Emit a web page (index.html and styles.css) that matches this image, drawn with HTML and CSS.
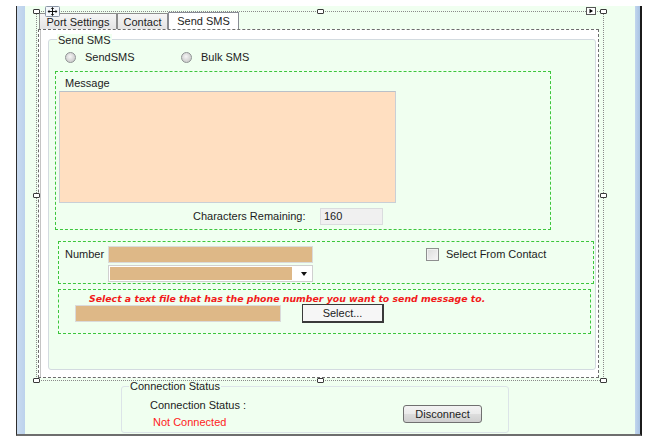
FILE: index.html
```html
<!DOCTYPE html>
<html lang="en">
<head>
<meta charset="utf-8">
<title>Send SMS - Designer</title>
<link rel="stylesheet" href="styles.css">
</head>
<body>
<div class="window">
  <div class="strip-left"></div>
  <div class="canvas">
    <div class="uc">
      <div class="tabs">
        <div class="tab tab-port">Port Settings</div>
        <div class="tab tab-contact">Contact</div>
        <div class="tab tab-sel">Send SMS</div>
      </div>
      <div class="tabpage">
        <div class="gb gb-main">
          <div class="gb-title">Send SMS</div>
          <div class="radios">
            <label class="radio radio-first"><span class="radio-dot"></span><span>SendSMS</span></label>
            <label class="radio"><span class="radio-dot"></span><span>Bulk SMS</span></label>
          </div>
          <div class="panel msg-panel">
            <div class="msg-label">Message</div>
            <div class="msg-text"></div>
            <div class="chars">
              <span class="chars-label">Characters Remaining:</span>
              <span class="chars-box">160</span>
            </div>
          </div>
          <div class="panel num-panel">
            <div class="num-row">
              <span class="num-label">Number</span>
              <span class="textbox num-box"></span>
              <span class="checkbox"></span>
              <span class="check-label">Select From Contact</span>
            </div>
            <div class="combo">
              <span class="combo-fill"></span>
              <span class="combo-arrow"></span>
            </div>
          </div>
          <div class="panel file-panel">
            <div class="file-hint">Select a text file that has the phone number you want to send message to.</div>
            <div class="file-row">
              <span class="textbox file-box"></span>
              <span class="btn-select">Select...</span>
            </div>
          </div>
        </div>
      </div>

      <!-- designer selection adornments -->
      <span class="handle h-tl"></span>
      <span class="handle h-tm"></span>
      <span class="handle h-tr"></span>
      <span class="handle h-ml"></span>
      <span class="handle h-mr"></span>
      <span class="handle h-bl"></span>
      <span class="handle h-bm"></span>
      <span class="handle h-br"></span>
      <svg class="move-glyph" width="15" height="11" viewBox="0 0 15 11">
        <rect x="0.5" y="0.5" width="14" height="10" rx="1" fill="#f4f7fb" stroke="#8a96a6"/>
        <path d="M7.5 1.5 V9.5 M3 5.5 H12" stroke="#111" stroke-width="1"/>
        <path d="M7.5 1.2 L5.8 3 H9.2 Z M7.5 9.8 L5.8 8 H9.2 Z M2.6 5.5 L4.4 3.8 V7.2 Z M12.4 5.5 L10.6 3.8 V7.2 Z" fill="#111"/>
      </svg>
      <svg class="smart-tag" width="10" height="8" viewBox="0 0 10 8">
        <rect x="0.5" y="0.5" width="9" height="7" fill="#fff" stroke="#555"/>
        <path d="M3.5 1.8 L7 4 L3.5 6.2 Z" fill="#000"/>
      </svg>
    </div>

    <div class="gb conn">
      <div class="gb-title conn-title">Connection Status</div>
      <div class="conn-row">
        <div class="conn-col">
          <div>Connection Status :</div>
          <div class="not-connected">Not Connected</div>
        </div>
        <span class="btn-disconnect">Disconnect</span>
      </div>
    </div>
  </div>
  <div class="strip-right"></div>
</div>
</body>
</html>
```

FILE: styles.css
```css
* { box-sizing: border-box; }

html, body {
  margin: 0;
  background: #ffffff;
}

body {
  font-family: "Liberation Sans", Arial, sans-serif;
  font-size: 11px;
  line-height: 13px;
  color: #1c1c1c;
}

/* host window frame around the design surface */
.window {
  display: flex;
  width: 626px;
  height: 430px;
  margin: 6px 0 0 16px;
  border-left: 1px solid #2e2e2e;
  border-right: 2px solid #1b1b1b;
  border-bottom: 2px solid #6e6e6e;
}

.strip-left {
  width: 8px;
  background: linear-gradient(90deg, #c9dbf0, #bcd2ec);
}

.strip-right {
  width: 5px;
  background: linear-gradient(90deg, #c2d6ee, #a9c3e3);
}

.canvas {
  flex: 1;
  background: #f0fff0;
  display: flex;
  flex-direction: column;
  align-items: flex-start;
}

/* user control with its selection frame */
.uc {
  position: relative;
  margin: 5px 0 0 11px;
  width: 568px;
  height: 370px;
  border: 1px dotted #8a8a8a;
}

.tabs {
  display: flex;
  align-items: flex-end;
  height: 17px;
  margin-left: 2px;
}

.tab {
  height: 16px;
  padding-top: 2px;
  border: 1px solid #8d8d8d;
  border-bottom: none;
  background: linear-gradient(#f6f6f6, #e4e4e4);
  text-align: center;
  white-space: nowrap;
}

.tab-port { width: 78px; }
.tab-contact { width: 51px; }

.tab-sel {
  width: 71px;
  height: 17px;
  padding-top: 2px;
  background: #ffffff;
  border-color: #898c95;
}

.tabpage {
  margin-left: 1px;
  width: 561px;
  height: 349px;
  border: 1px dashed #6c6c6c;
  background: #ffffff;
  padding: 9px 2px 7px 9px;
  box-shadow: inset 1px 0 0 #ffffff, inset 2px 0 0 #c4c4c4;
}

/* group boxes */
.gb {
  display: flex;
  flex-direction: column;
  align-items: flex-start;
  border: 1px solid #d3dbe0;
  border-radius: 3px;
  background: #f0fff0;
}

.gb-main {
  width: 548px;
  height: 331px;
}

.gb-title {
  margin: -6px 0 0 8px;
  padding: 0 1px;
  background: #f0fff0;
  white-space: nowrap;
}

.radios {
  display: flex;
  align-items: center;
  height: 13px;
  margin: 4px 0 0 16px;
}

.radio {
  display: flex;
  align-items: center;
  gap: 9px;
}

.radio-first { width: 116px; }

.radio-dot {
  width: 11px;
  height: 11px;
  border-radius: 50%;
  border: 1px solid #8f9394;
  background: radial-gradient(circle at 45% 40%, #f6f6f6 0, #dcdcdc 45%, #c3c3c3 100%);
}

.panel {
  display: flex;
  flex-direction: column;
  align-items: flex-start;
  border: 1px dashed #3cc63c;
}

.msg-panel {
  margin: 7px 0 0 6px;
  width: 496px;
  height: 159px;
}

.msg-label {
  margin: 5px 0 0 9px;
}

.msg-text {
  margin: 1px 0 0 3px;
  width: 337px;
  height: 112px;
  background: #ffdfc1;
  border: 1px solid #c9cfd6;
  border-top-color: #b9c0c8;
}

.chars {
  display: flex;
  align-items: center;
  height: 17px;
  margin: 5px 0 0 137px;
}

.chars-label {
  width: 127px;
  white-space: nowrap;
}

.chars-box {
  width: 63px;
  height: 17px;
  padding: 1px 0 0 3px;
  background: #f0f0f0;
  border: 1px solid #dadcde;
}

.num-panel {
  margin: 11px 0 0 9px;
  width: 536px;
  height: 43px;
}

.num-row {
  display: flex;
  align-items: center;
  height: 17px;
  margin-top: 4px;
}

.num-label {
  width: 49px;
  padding-left: 6px;
}

.textbox {
  display: block;
  height: 17px;
  background: #deb887;
  border: 1px solid #dadada;
}

.num-box { width: 205px; }

.checkbox {
  width: 13px;
  height: 13px;
  margin-left: 113px;
  border: 1px solid #8e8f8f;
  background: linear-gradient(135deg, #dcdcdc, #f7f7f7);
  box-shadow: inset 0 0 0 1px #f2f2f2;
}

.check-label {
  margin-left: 7px;
  white-space: nowrap;
}

.combo {
  display: flex;
  align-items: center;
  width: 205px;
  height: 17px;
  margin: 2px 0 0 49px;
  padding: 1px;
  background: #ffffff;
  border: 1px solid #d0d0d0;
}

.combo-fill {
  width: 182px;
  height: 13px;
  background: #deb887;
}

.combo-arrow {
  margin-left: 9px;
  width: 0;
  height: 0;
  border-left: 3.5px solid transparent;
  border-right: 3.5px solid transparent;
  border-top: 4px solid #111;
}

.file-panel {
  margin: 5px 0 0 9px;
  width: 533px;
  height: 45px;
}

.file-hint {
  margin: 4px 0 0 30px;
  font-family: "DejaVu Sans", Verdana, sans-serif;
  font-weight: bold;
  font-style: italic;
  font-size: 9.35px;
  line-height: 10px;
  color: #f21a1a;
  white-space: nowrap;
}

.file-row {
  display: flex;
  align-items: center;
  height: 19px;
}

.file-box {
  width: 206px;
  margin-left: 16px;
}

.btn-select {
  width: 82px;
  height: 19px;
  margin-left: 21px;
  padding-top: 2px;
  text-align: center;
  background: #f6f6f6;
  border: 1px solid #3a3a3a;
  border-right-width: 2px;
  border-bottom-width: 2px;
}

/* connection status group at the bottom of the form */
.conn {
  margin: 5px 0 0 96px;
  width: 388px;
  height: 47px;
  border-color: #dce4e8;
}

.conn-title {
  margin: -7px 0 0 7px;
}

.conn-row {
  display: flex;
  margin-top: 6px;
  padding-left: 28px;
}

.conn-col {
  width: 253px;
}

.not-connected {
  margin: 4px 0 0 3px;
  color: #ff1c1c;
}

.btn-disconnect {
  width: 79px;
  height: 18px;
  margin-top: 6px;
  padding-top: 2px;
  text-align: center;
  border: 1px solid #707070;
  border-radius: 3px;
  background: linear-gradient(#f3f3f3, #ebebeb 48%, #dddddd 52%, #cfcfcf);
}

/* selection handles and glyphs drawn by the designer */
.handle {
  position: absolute;
  width: 7px;
  height: 5px;
  border: 1px solid #3a3a3a;
  border-radius: 1px;
  background: #ffffff;
}

.h-tl { left: -4px; top: -3px; }
.h-tm { left: 280px; top: -3px; }
.h-tr { left: 563px; top: -3px; }
.h-ml { left: -4px; top: 181px; }
.h-mr { left: 563px; top: 181px; }
.h-bl { left: -4px; top: 366px; }
.h-bm { left: 280px; top: 366px; }
.h-br { left: 563px; top: 366px; }

.move-glyph {
  position: absolute;
  left: 8px;
  top: -6px;
}

.smart-tag {
  position: absolute;
  left: 549px;
  top: -5px;
}
```
